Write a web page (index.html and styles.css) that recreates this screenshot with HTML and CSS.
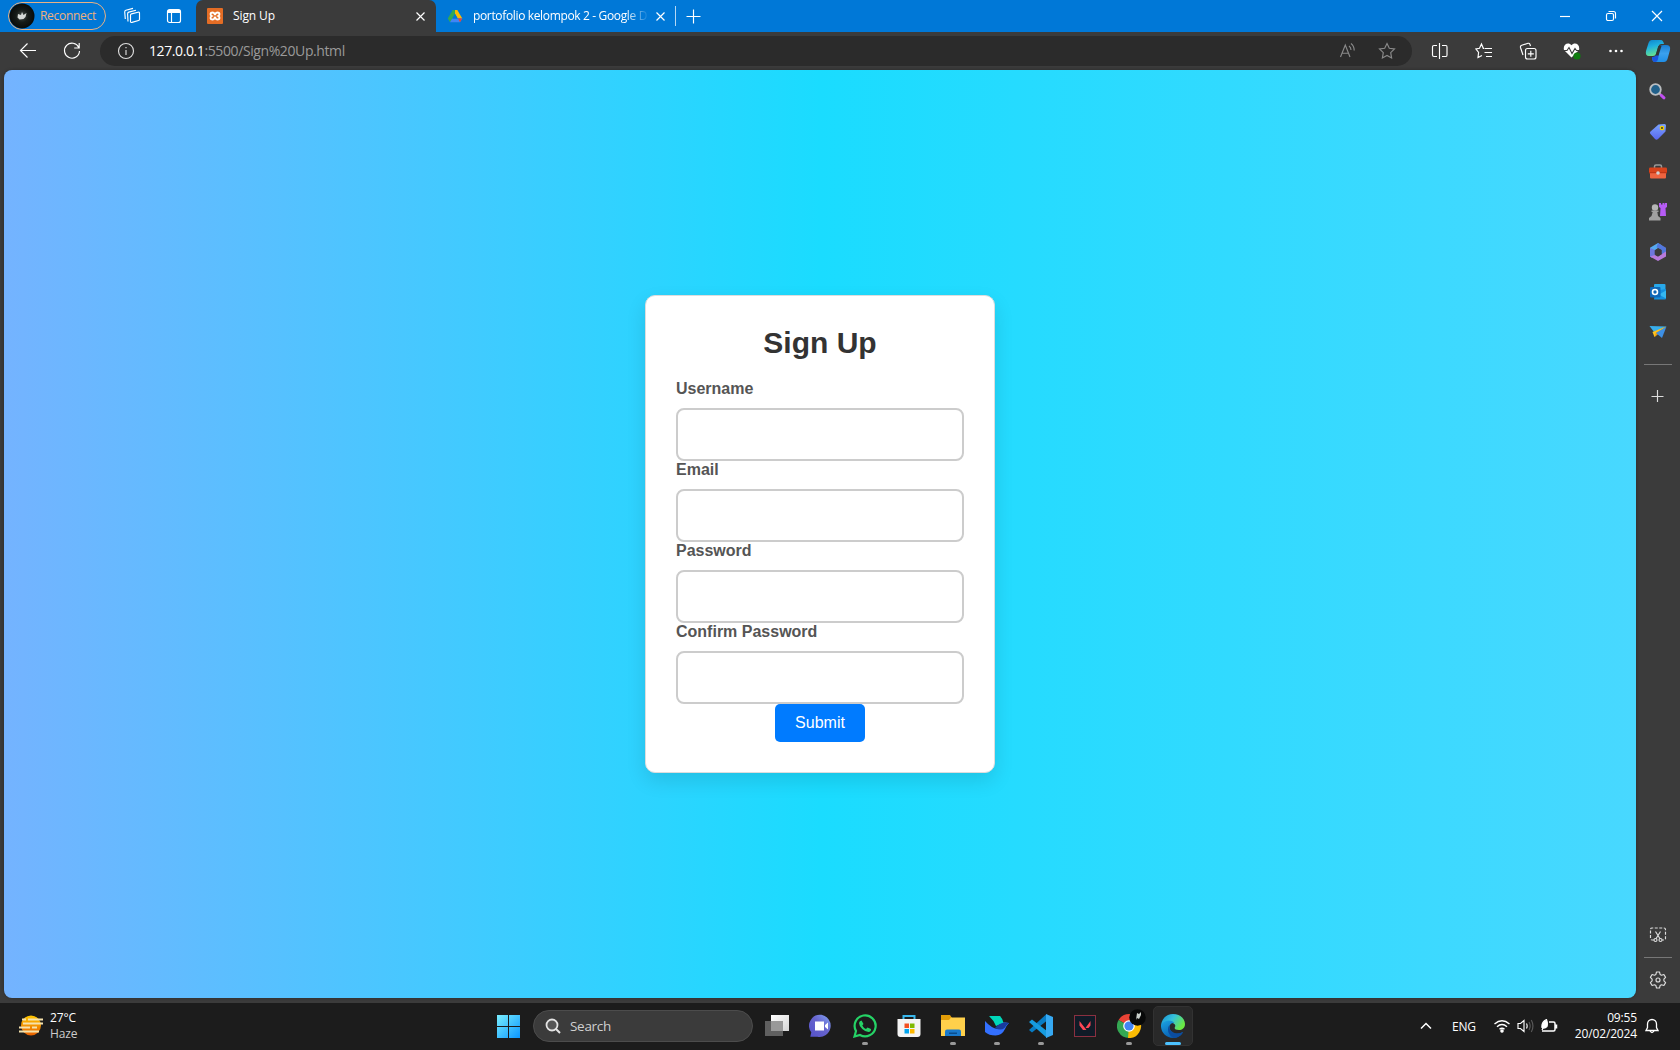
FILE: index.html
```html
<!DOCTYPE html>
<html lang="en">
<head>
<meta charset="utf-8">
<title>Sign Up</title>
<link rel="stylesheet" href="styles.css">
</head>
<body>
<header class="titlebar">
  <div class="profile">
    <svg width="26" height="26" viewBox="0 0 26 26"><defs><radialGradient id="av"><stop offset="0" stop-color="#4a524e"/><stop offset=".5" stop-color="#151b18"/><stop offset="1" stop-color="#080b0a"/></radialGradient></defs><circle cx="13" cy="13" r="12.5" fill="url(#av)"/><path d="M9 11l3 1 1-3 1.500 3 3-2-1 4-2 2-4 .5-2-2z" fill="#d5d9d6"/></svg>
    <span class="profile-name">Reconnect</span>
  </div>
  <div class="tool workspaces"><svg class="line" width="18" height="18" viewBox="0 0 18 18"><path d="M7.500 8.200q0-1 1-1.300l6.500-1.700q1.500-.3 1.500 1v6q0 1-1 1.300L9 15.400q-1.500.4-1.500-1zM5 14.500l-.4-7.600q0-1.400 1.200-1.800L13 3.200M2.300 12L1.700 5q0-1.300 1.200-1.700L10 1.400"/></svg></div>
  <div class="tool"><svg class="line" width="16" height="16" viewBox="0 0 16 16"><rect x="1.500" y="1.500" width="13" height="13" rx="2"/><path d="M5.500 5v9"/><path d="M2 3.500h12" stroke-width="3"/></svg></div>
  <div class="tab active">
    <svg width="16" height="16" viewBox="0 0 16 16"><rect width="16" height="16" rx="1" fill="#e46d25"/><path d="M5.500 4.500C3 4.500 3 7 4.800 8 3 9 3 11.500 5.500 11.500S7 9.500 8 9.500s0 2 2.500 2S13 9 11.200 8C13 7 13 4.500 10.500 4.500S9 6.500 8 6.500s0-2-2.500-2z" fill="none" stroke="#fff" stroke-width="1.900"/></svg>
    <span class="tab-title t-sign">Sign Up</span>
    <svg class="line close" width="16" height="16" viewBox="0 0 16 16"><path d="M4.500 4.500l8 8M12.500 4.500l-8 8"/></svg>
  </div>
  <div class="tab inactive">
    <svg width="16" height="16" viewBox="0 0 16 16"><path d="M5.700 2h4.600l5 8.500h-4.600z" fill="#fbbc04"/><path d="M5.700 2h2.300v3.800L5.300 11 3 14.300.8 10.500z" fill="#34a853"/><path d="M5.200 10.500h10L13 14.300H3z" fill="#4285f4"/><path d="M11 10.500h4.300L13 14.300z" fill="#ea4335"/><path d="M8 5.800l2.700 4.700H5.200z" fill="#0078d7"/></svg>
    <span class="tab-title t-drive">portofolio kelompok 2 - Google D</span>
    <svg class="line close" width="16" height="16" viewBox="0 0 16 16"><path d="M4.500 4.500l8 8M12.500 4.500l-8 8"/></svg>
  </div>
  <div class="tab-sep"></div>
  <div class="new-tab"><svg class="line" width="16" height="16" viewBox="0 0 16 16"><path d="M8.500 1.500v14M1.500 8.500h14"/></svg></div>
  <div class="win-buttons">
    <div class="win"><svg class="line" width="12" height="12" viewBox="0 0 12 12"><path d="M1 6.500h10"/></svg></div>
    <div class="win"><svg class="line" width="12" height="12" viewBox="0 0 12 12"><rect x="1.500" y="3.500" width="7" height="7" rx="1.500"/><path d="M3.500 1.500h5q2 0 2 2v5"/></svg></div>
    <div class="win"><svg class="line" width="12" height="12" viewBox="0 0 12 12"><path d="M1 1l10 10M11 1L1 11"/></svg></div>
  </div>
</header>

<nav class="toolbar">
  <div class="btn"><svg class="line" width="18" height="18" viewBox="0 0 18 18"><path d="M17 8.500H1.500M8.500 1.500l-7 7 7 7"/></svg></div>
  <div class="btn"><svg class="line" width="18" height="18" viewBox="0 0 18 18"><path d="M15.800 5.500A7.500 7.500 0 1 0 16.500 9M16.200 1v5h-5"/></svg></div>
  <div class="address">
    <svg class="line info" width="20" height="20" viewBox="0 0 20 20"><circle cx="10" cy="10" r="7.500"/><path d="M10 9v5M10 6v1.300"/></svg>
    <span class="url"><b>127.0.0.1</b>:5500/Sign%20Up.html</span>
    <div class="field-icon"><svg class="line" width="18" height="18" viewBox="0 0 18 18"><path d="M1.500 15L6.300 3l4.700 12M3.100 11.200h6.300M10 4q2 1.500 2 4M12 1.500q3.200 2.500 3.200 7"/></svg></div>
    <div class="field-icon"><svg class="line" width="18" height="18" viewBox="0 0 18 18"><path d="M9 1.500l2.300 4.800 5.200.7-3.800 3.700.9 5.300L9 13.500 4.400 16l.9-5.300L1.500 7l5.200-.7z"/></svg></div>
  </div>
  <div class="btn"><svg class="line" width="18" height="18" viewBox="0 0 18 18"><path d="M8.500 1v16M6 3.500H3q-1.500 0-1.500 1.500v8q0 1.500 1.500 1.500h3M11 3.500h4q1 0 1 1.500v8q0 1.500-1 1.500h-4"/></svg></div>
  <div class="btn"><svg class="line" width="18" height="18" viewBox="0 0 18 18"><path d="M9 6.300h-.7L6.500 2 4.500 6.300 1 7l2.600 3.300L3 15.500 7 13.500M9.500 6.500H17M9.500 10.500H17M11 14.500h6"/></svg></div>
  <div class="btn"><svg class="line" width="18" height="18" viewBox="0 0 18 18"><rect x="6.500" y="6.500" width="10.500" height="10.500" rx="2"/><path d="M11.800 8.800v6M8.800 11.800h6M4 13L1.500 5.500q-.4-1.700 1.200-2.200L9 1.300q1.400-.3 1.900 1l.6 1.700"/></svg></div>
  <div class="btn"><svg width="18" height="18" viewBox="0 0 18 18"><path d="M8.500 3.200C11.500-.5 17.500 2 16 8l-7.500 7.500L1 8C-.5 2 5.500-.5 8.500 3.200z" fill="#fff"/><path d="M0 8.500h4l2-3 3 6 3-5 1.500 2H18" fill="none" stroke="#3b3b3b" stroke-width="1.100"/><circle cx="14" cy="14" r="3.600" fill="#107c10"/></svg></div>
  <div class="btn"><svg width="18" height="18" viewBox="0 0 18 18"><g fill="#fff"><circle cx="3.500" cy="9" r="1.300"/><circle cx="9" cy="9" r="1.300"/><circle cx="14.500" cy="9" r="1.300"/></g></svg></div>
  <div class="btn copilot"><svg width="26" height="24" viewBox="0 0 26 24"><defs><linearGradient id="c1" x2=".3" y2="1"><stop stop-color="#0d83cb"/><stop offset=".45" stop-color="#1eafe0"/><stop offset="1" stop-color="#64e292"/></linearGradient><linearGradient id="c2" x2="0" y2="1"><stop stop-color="#1a7fd4"/><stop offset=".5" stop-color="#3aa0ee"/><stop offset="1" stop-color="#1f8fe8"/></linearGradient></defs><path d="M7 1h9q2 0 3 4h-3q-2 0-3 3l-2 7q-.7 2-3 2H4Q0 17 1 12L3.500 4Q4.500 1 7 1z" fill="url(#c1)"/><path d="M19 6h2q5 0 4 5l-2.500 9q-1 3-3.500 3h-9q-3 0-3-5h2q2.500 0 3-2l2.500-8q.7-2 4.500-2z" fill="url(#c2)"/><path d="M7 18q3 .3 4-2l3-1-1 5q-.6 3-3 3-3 0-3-5z" fill="#1b54dd"/><path d="M13.500 7h3l-3 9.500h-3z" fill="#303636"/></svg></div>
</nav>

<div class="main">
  <main class="page">
    <form class="card">
      <h1>Sign Up</h1>
      <label for="u">Username</label><input id="u" type="text">
      <label for="e">Email</label><input id="e" type="email">
      <label for="p">Password</label><input id="p" type="password">
      <label for="c">Confirm Password</label><input id="c" type="password">
      <button type="button">Submit</button>
    </form>
  </main>
  <aside class="sidebar">
    <div class="side"><svg width="18" height="18" viewBox="0 0 18 18"><circle cx="6.500" cy="6.500" r="5.300" fill="#21608a" stroke="#b9bdc0" stroke-width="1.800"/><path d="M10.500 10.500l1.500 1.500" stroke="#bbb" stroke-width="2"/><path d="M12.300 12.300l2.700 2.500" stroke="#c04ff0" stroke-width="3" stroke-linecap="round"/></svg></div>
    <div class="side"><svg width="18" height="18" viewBox="0 0 18 18"><defs><linearGradient id="tg" x2="0" y2="1"><stop stop-color="#7aa4ff"/><stop offset="1" stop-color="#5966ee"/></linearGradient></defs><path d="M9.500 1.500L15.500 1q1.500 0 1.500 1.500l-.5 6L9 16q-1.500 1.500-3 0l-4.500-5q-1.300-1.300 0-2.500z" fill="url(#tg)"/><circle cx="13" cy="5" r="1.700" fill="#3c3c30" stroke="#f3d000" stroke-width="1.300"/></svg></div>
    <div class="side"><svg width="18" height="18" viewBox="0 0 18 18"><path d="M5.500 5V3.500Q5.500 2 7 2h4q1.500 0 1.500 1.500V5" fill="none" stroke="#999" stroke-width="1.500"/><rect y="4.500" width="18" height="6" rx="1.300" fill="#d8431c"/><path d="M1 9.500h16v5q0 1-1 1H2q-1 0-1-1z" fill="#ee6440"/><path d="M0 9.200h18v1H0z" fill="#b53012"/><circle cx="9" cy="10" r="1.800" fill="#d0d0d0"/></svg></div>
    <div class="side"><svg width="18" height="18" viewBox="0 0 18 18"><path d="M10 0h2v1.500h1.500V0h2v1.500H16V0h2v4l-1.500 1 .5 8h-6l.5-8-1.500-1z" fill="#b65cf5"/><circle cx="6" cy="4.500" r="3.200" fill="#b5b5b5"/><path d="M2.500 7.500h7V9H8.300L9 13l2.500 2v2.500H0V15l2.500-2L3.700 9H2.500z" fill="#a0a0a0"/></svg></div>
    <div class="side"><svg width="18" height="18" viewBox="0 0 18 18"><path d="M9 0l4 2.500L6.500 7v5L1 13.500V4.800z" fill="#56aaf0"/><path d="M1 5l5 2v5.500L3 15l-2-1.500z" fill="#6d77dd"/><path d="M9 0l8 4.700v8.800l-4.500-3V7L7.500 4.300z" fill="#5377dc"/><path d="M1 13.500L6 12l3 1.500 8-5v5L9 18z" fill="#b77adb"/><path d="M9 5.300l3.500 1.700v4.200L9 13.500l-3.300-2V7.300z" fill="#3b3b3b"/></svg></div>
    <div class="side"><svg width="18" height="18" viewBox="0 0 18 18"><rect x="5" y="1" width="11.500" height="12" rx="1" fill="#28a8ea"/><path d="M6 8l11-2v9.500q0 1-1 1H5z" fill="#1490df"/><path d="M10 11.500l7-4v8z" fill="#35b8f1"/><rect x="1" y="4" width="10.500" height="10.500" rx="1" fill="#0f67b7"/><circle cx="6" cy="9" r="2.500" fill="none" stroke="#fff" stroke-width="1.600"/></svg></div>
    <div class="side"><svg width="18" height="18" viewBox="0 0 18 18"><path d="M.5 3L17.500 3.500 5 9z" fill="#38aeeb"/><path d="M17 3.500L3.500 9l2 5z" fill="#ffc41e"/><path d="M17 4L7 9.500 5.500 14z" fill="#ef9b11"/><path d="M17.500 3.500L13 15 7 10z" fill="#3d8fe4"/></svg></div>
    <div class="side-line"></div>
    <div class="side add"><svg class="line" width="14" height="14" viewBox="0 0 14 14"><path d="M6.500 1v12M.5 7.500h12"/></svg></div>
    <div class="side cut"><svg class="line" width="18" height="18" viewBox="0 0 18 18"><path d="M5 14H3q-1.500 0-1.500-1.500V3.500Q1.500 2 3 2h12q1.500 0 1.500 1.500v9Q16.500 14 15 14h-2" stroke-dasharray="3 1.500"/><path d="M6.500 5.500l4.700 7.500M11.500 5.500L6.800 13"/><circle cx="6.500" cy="14" r="1.500"/><circle cx="11.500" cy="14" r="1.500"/></svg></div>
    <div class="side-line low"></div>
    <div class="side gear"><svg class="line" width="18" height="18" viewBox="0 0 18 18"><path d="M7.500 1h3l.6 2.400 1.400.8 2.400-.7 1.700 2.900L14.900 8.200v1.600l1.700 1.800-1.700 2.900-2.400-.7-1.400.8-.6 2.400h-3l-.6-2.400-1.400-.8-2.400.7-1.700-2.900 1.700-1.800V8.200L1.400 6.400l1.700-2.900 2.400.7 1.400-.8z" stroke-linejoin="round"/><circle cx="9" cy="9" r="2"/></svg></div>
  </aside>
</div>

<footer class="taskbar">
  <div class="weather">
    <svg width="24" height="22" viewBox="0 0 24 22"><defs><linearGradient id="sun" x2="0" y2="1"><stop stop-color="#ffc800"/><stop offset="1" stop-color="#e85f00"/></linearGradient></defs><circle cx="12" cy="10.500" r="10" fill="url(#sun)"/><g fill="#f5e2ac"><path d="M3 3.500h4v2H3zM9 3.500h15v2H9zM4 7.500h20v2H4zM0 11.500h11v2H0zM13 11.500h5v2h-5zM0 15.500h20v2H0z"/></g></svg>
    <div class="weather-text"><span>27°C</span><span class="dim">Haze</span></div>
  </div>
  <div class="apps">
    <div class="start"><svg width="23" height="23" viewBox="0 0 23 23"><defs><linearGradient id="wn" gradientUnits="userSpaceOnUse" x1="0" y1="0" x2="23" y2="23"><stop stop-color="#79efff"/><stop offset="1" stop-color="#0a95ff"/></linearGradient></defs><path d="M0 0h11v11H0zM12 0h11v11H12zM0 12h11v11H0zM12 12h11v11H12z" fill="url(#wn)"/></svg></div>
    <div class="search"><svg width="16" height="16" viewBox="0 0 16 16"><circle cx="7" cy="7" r="5.500" fill="#555" stroke="#e4e4e4" stroke-width="1.800"/><path d="M11 11l4 4" stroke="#e4e4e4" stroke-width="2"/></svg><span>Search</span></div>
    <div class="app"><svg width="24" height="24" viewBox="0 0 24 24"><defs><linearGradient id="tv" x2="1" y2="1"><stop stop-color="#fff"/><stop offset="1" stop-color="#d5d5d5"/></linearGradient></defs><path d="M6 1h18v16H6z" fill="url(#tv)"/><path d="M0 7h18v15H0z" fill="#606060"/><path d="M6 7h12v10H6z" fill="#999"/></svg></div>
    <div class="app"><svg width="24" height="24" viewBox="0 0 24 24"><defs><linearGradient id="ch" x1="0" y1="1" x2="1" y2="0"><stop stop-color="#5451ca"/><stop offset=".55" stop-color="#6764cd"/><stop offset="1" stop-color="#82a5f4"/></linearGradient></defs><path d="M12.500.8A11 11 0 1 1 8.500 22.800H1.300l1-4.500A11 11 0 0 1 12.500.8z" fill="url(#ch)"/><path d="M6 7.500h9v9H6zM16 11L19 8.500v7L16 13z" fill="#fff"/></svg></div>
    <div class="app run"><svg width="24" height="24" viewBox="0 0 24 24"><path d="M1.500 22.500L3 17A10.500 10.500 0 1 1 7 21z" fill="none" stroke="#25d366" stroke-width="2.200"/><path d="M8.500 6.500l2 3.500-1.200 1.500q1.200 2.500 3.700 3.500l1.500-1.500 3.500 1.500q.3 2.500-2.500 3-3 0-6.200-3T6 9q.5-2.500 2.500-2.500z" fill="#25d366"/></svg></div>
    <div class="app"><svg width="24" height="24" viewBox="0 0 24 24"><path d="M6.500 6.500V2h11v4.500" fill="none" stroke="#39b7ec" stroke-width="2"/><path d="M.5 5h23v15q0 3-3 3h-17q-3 0-3-3z" fill="#f4f4f4"/><path d="M7.500 9.500H12V14H7.500z" fill="#f25022"/><path d="M13 9.500h4.500V14H13z" fill="#7fba00"/><path d="M7.500 15H12v4.500H7.500z" fill="#00a4ef"/><path d="M13 15h4.500v4.500H13z" fill="#ffb900"/></svg></div>
    <div class="app run"><svg width="24" height="24" viewBox="0 0 24 24"><path d="M0 1h9l2 3h13v17H0z" fill="#e29d08"/><path d="M0 6h8l2-2.500h14V22H0z" fill="#ffd04b"/><path d="M4 22v-4.500q0-2 2-2h12q2 0 2 2V22z" fill="#1979cb"/><path d="M8 18.500h8V20H8z" fill="#0a4d8c"/></svg></div>
    <div class="app run"><svg width="24" height="24" viewBox="0 0 24 24"><path d="M4 2h11q3 3 3.500 7L11 12Q8.500 6 4 2z" fill="#00d6b9"/><path d="M0 7q6 7 13 8 1.500-6 6-6.500 3-.3 5 .5-3 3-4 6-3 6.500-9.500 6.500Q4 21.500 0 18z" fill="#3370ff"/><path d="M10 14q5-6.500 14-5-3 2-4.500 5-3.500 3-9.500 0z" fill="#183b9c"/></svg></div>
    <div class="app run"><svg width="24" height="24" viewBox="0 0 24 24"><path d="M17.500 0v7L3 18.500 0 16z" fill="#087cc4"/><path d="M0 8l3-2.500L18 17v7z" fill="#169bdf"/><path d="M17 0l7 3v18l-7 3z" fill="#36a9f2"/></svg></div>
    <div class="app"><svg width="24" height="24" viewBox="0 0 24 24"><rect x="1.500" y="1.500" width="21" height="21" fill="#101b27" stroke="#8a3040" stroke-width="1"/><path d="M6.500 7l7 9H10l-3.500-4.500zM17.500 7v4.500L15.500 14h-3z" fill="#ff4655"/></svg></div>
    <div class="app run"><svg class="chrome" width="30" height="30" viewBox="0 0 30 30"><path d="M12 18L1.600 12A12 12 0 0 1 22.400 12z" fill="#ea4335"/><path d="M12 18L1.600 12A12 12 0 0 0 12 30l5-9z" fill="#34a853"/><path d="M12 18l-1 12A12 12 0 0 0 22.400 12H12z" fill="#fbbc04"/><circle cx="12" cy="18" r="5.800" fill="#fff"/><circle cx="12" cy="18" r="4.600" fill="#4285f4"/><circle cx="20.500" cy="9.500" r="8.300" fill="#080909"/><path d="M20 5l2 1 2-2v3l-2 4-2-1-1 2z" fill="#c9cfcb"/></svg></div>
    <div class="app current"><svg width="24" height="24" viewBox="0 0 24 24"><defs><linearGradient id="eg" x2="1" y2=".5"><stop stop-color="#168ed4"/><stop offset=".5" stop-color="#35c1dc"/><stop offset="1" stop-color="#6bea43"/></linearGradient><linearGradient id="eb" x2=".6" y2="1"><stop stop-color="#1ba5e4"/><stop offset="1" stop-color="#0759ad"/></linearGradient></defs><path d="M0 11C1 4 6 0 12 0c7 0 12 4.800 12 10 0 4-3 6-6 6-4 0-5-1.500-4-3 2-4-6-7-14-2z" fill="url(#eg)"/><path d="M0 11c3-5 10-6 13.500-2-4-.5-5.500 2.500-4.800 5.500C10 20 16 21.500 22 18c-2 4-6 6-10 6C5 24-.5 18 0 11z" fill="url(#eb)"/><path d="M8.500 11c-3 4-1.500 10 4 13 4 0 8-2.500 9.500-6-6 3-12.500.5-13.500-4z" fill="#0b4da0"/></svg></div>
  </div>
  <div class="tray">
    <div class="chev"><svg class="line" width="12" height="8" viewBox="0 0 12 8"><path d="M1 6.500l5-5 5 5" stroke-width="1.500"/></svg></div>
    <span class="lang">ENG</span>
    <div class="status">
      <svg class="line" width="16" height="14" viewBox="0 0 16 14"><path d="M.5 5q7.500-6.500 15 0M3 7.700q5-4.500 10 0M5.500 10.300q2.500-2.300 5 0" stroke-width="1.400"/><circle cx="8" cy="12" r="1.200" fill="#fff"/></svg>
      <svg class="line" width="17" height="14" viewBox="0 0 17 14"><path d="M1 4.500h2.500L7 1.500v11L3.500 9.500H1zM9.500 4.500q1.300 2.500 0 5"/><path d="M12 3q2.300 4 0 8M14.300 1q3.300 6 0 12" stroke="#5a5a5a"/></svg>
      <svg class="line" width="17" height="14" viewBox="0 0 17 14"><path d="M8 3h4.500q1.500 0 1.500 1.500v6q0 1.500-1.500 1.500H1M15.500 5.500v4" stroke-width="1.500"/><path d="M1 9Q0 3 5.500.500q1.500 4 .5 7-2 2-4 1.500l-1 2" fill="#fff"/></svg>
    </div>
    <div class="clock"><span class="time">09:55</span><span class="date">20/02/2024</span></div>
    <svg class="line bell" width="14" height="16" viewBox="0 0 14 16"><path d="M1 12.500l1.500-3V6a4.500 4.500 0 0 1 9 0v3.500l1.500 3zM5 13q2 3 4 0" stroke-width="1.300"/></svg>
  </div>
</footer>
</body>
</html>
```
FILE: styles.css
```css
* { box-sizing: border-box; }
body { margin: 0; width: 1680px; height: 1050px; overflow: hidden; display: flex; flex-direction: column; background: #3b3b3b; color: #fff; font: 12px/16px "Open Sans", "Noto Sans", sans-serif; }
svg { display: block; flex: none; }
.line { fill: none; stroke: #fff; stroke-width: 1.15; }

/* Title bar */
.titlebar { height: 32px; flex: none; display: flex; align-items: center; background: #0078d7; padding-left: 8px; }
.profile { width: 98px; height: 28px; border: 1px solid #e9b183; border-radius: 14px; display: flex; align-items: center; gap: 5px; color: #efb07c; }
.profile-name { letter-spacing: -0.3px; }
.tool { width: 42px; display: flex; justify-content: center; }
.workspaces { margin-left: 5px; }
.tab { height: 32px; display: flex; align-items: center; }
.active { width: 240px; margin-left: 1px; padding: 0 8px 0 11px; gap: 10px; background: #3b3b3b; border-radius: 7px 7px 0 0; }
.inactive { width: 239px; padding: 0 7px 0 11px; gap: 10px; }
.tab-title { flex: 1; white-space: nowrap; }
.t-sign { letter-spacing: -0.1px; }
.t-drive { flex: none; width: 178px; margin-right: -9px; letter-spacing: -0.35px; -webkit-mask-image: linear-gradient(90deg, #000 152px, transparent 176px); mask-image: linear-gradient(90deg, #000 152px, transparent 176px); }
.tab-sep { width: 1px; height: 20px; background: #b5d7f3; }
.new-tab { width: 34px; display: flex; justify-content: center; }
.win-buttons { margin-left: auto; display: flex; }
.win { width: 46px; display: flex; justify-content: center; }

/* Toolbar */
.toolbar { height: 38px; flex: none; display: flex; align-items: center; padding-left: 6px; }
.btn { width: 44px; display: flex; justify-content: center; }
.copilot { width: 40px; }
.address { width: 1312px; height: 30px; margin: 0 6px; padding: 0 6px 0 16px; display: flex; align-items: center; background: #2b2b2b; border-radius: 15px; }
.info { stroke: #ddd; }
.url { flex: 1; margin-left: 13px; font-size: 14px; color: #9a9a9a; letter-spacing: -0.4px; }
.url b { font-weight: 400; color: #fff; }
.field-icon { width: 39px; display: flex; justify-content: center; }
.field-icon .line { stroke: #8a8a8a; }

/* Page and side bar */
.main { height: 933px; flex: none; display: flex; padding-left: 4px; }
.page { width: 1632px; height: 928px; display: flex; align-items: center; justify-content: center; border-radius: 8px; background: linear-gradient(90deg, #74b3ff, #1adcff 50%, #48d8ff); box-shadow: 0 0 3px #2a2a2a; }
.card { width: 350px; height: 478px; padding: 30px; display: flex; flex-direction: column; background: #fff; border: 1px solid #ddd; border-radius: 10px; box-shadow: 0 8px 20px rgba(0, 0, 0, .11); font-family: "Liberation Sans", Arial, sans-serif; }
.card h1 { margin: 0 0 21px; font-size: 30px; line-height: 33px; text-align: center; color: #333; }
.card label { margin-bottom: 10px; font-size: 16px; line-height: 18px; font-weight: 700; color: #555; }
.card input { width: 100%; height: 53px; border: 2px solid #ccc; border-radius: 8px; background: #fff; }
.card button { width: 90px; height: 38px; padding: 0; align-self: center; border: 0; border-radius: 5px; background: #007bff; color: #fff; font: 16px/18px "Liberation Sans", Arial, sans-serif; }
.sidebar { width: 44px; display: flex; flex-direction: column; align-items: center; padding-top: 2px; }
.side { height: 40px; flex: none; display: flex; align-items: center; }
.side .line { stroke: #ddd; }
.side-line { width: 28px; height: 1px; margin-top: 12px; background: #777; }
.add { margin-top: 11px; }
.cut { margin-top: auto; }
.low { margin-top: 2px; }
.gear { margin: 2px 0 3px; }

/* Taskbar */
.taskbar { height: 47px; flex: none; display: grid; grid-template-columns: 486px 1fr 264px; background: #1c1c1c; }
.weather { display: flex; align-items: center; padding: 0 0 2px 19px; gap: 7px; }
.weather-text { display: flex; flex-direction: column; padding-top: 1px; font-size: 12px; letter-spacing: -0.1px; }
.dim { color: #ccc; }
.apps { display: flex; align-items: center; padding-bottom: 1px; }
.start { width: 45px; display: flex; justify-content: center; }
.search { width: 220px; height: 32px; margin: 0 2px; padding-left: 11px; display: flex; align-items: center; gap: 9px; border: 1px solid #4c4c4c; border-radius: 16px; background: #3b3b3b; color: #d0d0d0; font-size: 13.5px; letter-spacing: -0.3px; }
.app { position: relative; width: 40px; height: 40px; margin: 0 2px; display: flex; align-items: center; justify-content: center; }
.run::after, .current::after { content: ""; position: absolute; left: 17px; bottom: 1px; width: 6px; height: 3px; border-radius: 2px; background: #999; }
.chrome { margin: -6px -6px 0 0; }
.current { background: #292929; border: 1px solid #323232; border-radius: 5px; }
.current::after { left: 11px; bottom: 0; width: 16px; background: #4cc2ff; }
.tray { display: flex; align-items: center; padding-bottom: 1px; }
.chev { width: 20px; display: flex; justify-content: center; }
.lang { width: 42px; margin-left: 16px; font-size: 12px; letter-spacing: -0.2px; padding-top: 2px; }
.status { display: flex; align-items: center; gap: 7px; }
.clock { flex: 1; display: flex; flex-direction: column; align-items: flex-end; font-size: 12px; letter-spacing: -0.15px; }
.bell { margin: 0 21px 0 8px; }
```
